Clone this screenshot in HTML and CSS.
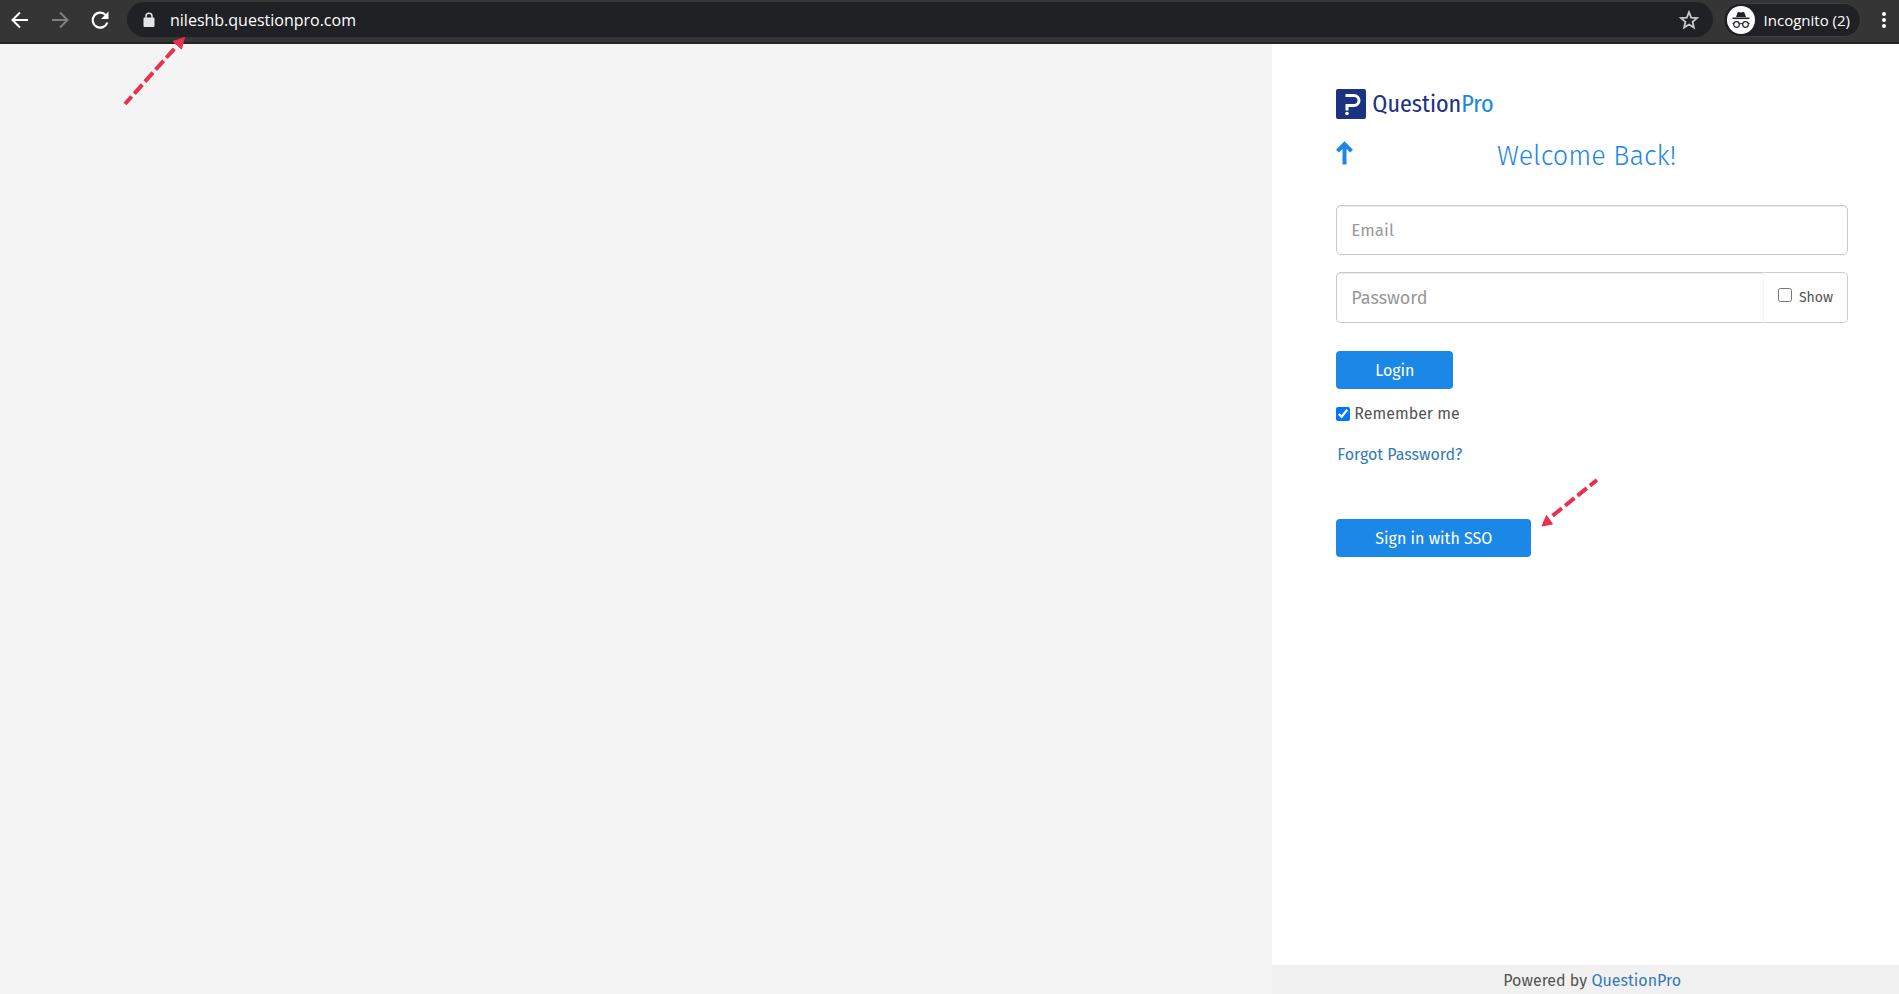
FILE: index.html
```html
<!DOCTYPE html>
<html lang="en">
<head>
  <meta charset="UTF-8">
  <title>QuestionPro Login</title>
  <link rel="stylesheet" href="styles.css">
</head>
<body>

  <!-- Browser bar -->
  <header class="toolbar">
    <nav class="nav-buttons">
      <button class="icon-btn" type="button" aria-label="Back">
        <svg width="20" height="20" viewBox="0 0 20 20" fill="none" stroke="#fff" stroke-width="2"><path d="M18 10H3M10 2.5L2.5 10l7.500 7.500"/></svg>
      </button>
      <button class="icon-btn" type="button" aria-label="Forward">
        <svg width="20" height="20" viewBox="0 0 20 20" fill="none" stroke="#808080" stroke-width="2"><path d="M2 10h15M10 2.500l7.500 7.500-7.500 7.500"/></svg>
      </button>
      <button class="icon-btn" type="button" aria-label="Reload">
        <svg width="20" height="20" viewBox="0 0 20 20"><path d="M17.300 12.500A7.500 7.500 0 1 1 15.800 5.200" fill="none" stroke="#fff" stroke-width="2.200"/><path d="M18.500 1.500V9H11z" fill="#fff"/></svg>
      </button>
    </nav>
    <div class="omnibox">
      <svg width="12" height="16" viewBox="0 0 12 16"><path d="M3 7V4.300a3 3 0 0 1 6 0V7" fill="none" stroke="#e4e4e4" stroke-width="1.500"/><rect x="0.500" y="5.500" width="11" height="9.500" rx="1.200" fill="#e4e4e4"/></svg>
      <span class="url">nileshb.questionpro.com</span>
      <button class="icon-btn" type="button" aria-label="Bookmark">
        <svg width="20" height="20" viewBox="0 0 20 20" fill="none" stroke="#c8c8c8" stroke-width="1.800"><path d="M10 2.200l2.200 5.400 5.800.5-4.400 3.800 1.300 5.700-4.900-3-4.900 3 1.300-5.700L2 8.100l5.800-.5z"/></svg>
      </button>
    </div>
    <div class="incognito">
      <svg width="28" height="28" viewBox="0 0 28 28">
        <circle cx="14" cy="14" r="14" fill="#fff"/>
        <path d="M9 11l1.600-4.400q.3-.8 1.100-.6l2.300.6 2.300-.6q.8-.2 1.100.6L19 11z" fill="#202124"/>
        <path d="M5.500 11.500h17v1.600h-17z" fill="#202124"/>
        <g fill="none" stroke="#202124" stroke-width="1.200"><circle cx="9.500" cy="18.500" r="2.800"/><circle cx="18.500" cy="18.500" r="2.800"/><path d="M12.300 18q1.700-1 3.400 0M5.500 17.500h1.300M21.200 17.500h1.300"/></g>
      </svg>
      <span>Incognito (2)</span>
    </div>
    <button class="icon-btn menu-btn" type="button" aria-label="Menu">
      <svg width="6" height="20" viewBox="0 0 6 20" fill="#fff"><circle cx="3" cy="4" r="2"/><circle cx="3" cy="10" r="2"/><circle cx="3" cy="16" r="2"/></svg>
    </button>
    <svg class="url-arrow" width="64" height="70" viewBox="0 0 64 70"><path d="M2 68L52 12" stroke="#e8304f" stroke-width="4" stroke-dasharray="12 4" stroke-dashoffset="2"/><path d="M61.500 1.500L50 5.500l8.500 7.500z" fill="#e8304f" stroke="#e8304f"/></svg>
  </header>

  <div class="page">
    <main class="panel">
      <div class="content">
        <div class="logo">
          <svg width="30" height="30" viewBox="0 0 30 30"><rect width="30" height="30" rx="2" fill="#1b3380"/><path d="M9.500 6.500H18a5 5 0 0 1 0 10H11V21.500" fill="none" stroke="#fff" stroke-width="3"/><circle cx="11" cy="24.500" r="1.800" fill="#fff"/></svg>
          <span class="logo-text">Question<span class="pro">Pro</span></span>
        </div>

        <div class="heading">
          <svg width="17" height="24" viewBox="0 0 17 24" fill="none" stroke="#1b87e6" stroke-width="4"><path d="M8.500 23.500V4M1.400 10.200L8.500 3l7.100 7.200"/></svg>
          <h1>Welcome Back!</h1>
        </div>

        <form>
          <input class="field" type="email" placeholder="Email" aria-label="Email">
          <div class="password-group">
            <input class="field" type="password" placeholder="Password" aria-label="Password">
            <label class="show"><input type="checkbox">Show</label>
          </div>
          <button class="btn" type="button">Login</button>
          <label class="remember"><input type="checkbox" checked>Remember me</label>
          <a class="forgot" href="#">Forgot Password?</a>
          <div class="sso">
            <button class="btn" type="button">Sign in with SSO</button>
            <svg class="sso-arrow" width="60" height="50" viewBox="0 0 60 50"><path d="M57 2L11 39" stroke="#e8304f" stroke-width="4" stroke-dasharray="12 4" stroke-dashoffset="3"/><path d="M2 48l4.500-10.500 6 8.500z" fill="#e8304f" stroke="#e8304f"/></svg>
          </div>
        </form>
      </div>

      <footer class="footer">Powered by <a href="#">QuestionPro</a></footer>
    </main>
  </div>

</body>
</html>
```

FILE: styles.css
```css
* {
  box-sizing: border-box;
}
body {
  margin: 0;
  min-height: 100vh;
  display: flex;
  flex-direction: column;
  font-family: 'Fira Sans', 'Noto Sans', sans-serif;
  font-size: 16px;
  color: #545454;
  background: #f4f4f4;
}
a {
  color: #337ab7;
  text-decoration: none;
}
svg {
  display: block;
  flex: none;
}

/* Browser bar */
.toolbar {
  position: relative;
  display: flex;
  align-items: center;
  height: 44px;
  padding: 2px 12px 5px 10px;
  background: #353535;
  border-bottom: 2px solid #252525;
  font-family: 'Segoe UI', 'Open Sans', sans-serif;
  color: #fff;
}
.nav-buttons {
  display: flex;
  gap: 20px;
  margin-right: 17px;
}
.icon-btn {
  padding: 0;
  border: none;
  background: none;
  cursor: pointer;
}
.omnibox {
  flex: 1;
  display: flex;
  align-items: center;
  height: 35px;
  padding: 0 14px 0 16px;
  border-radius: 18px;
  background: #202124;
}
.url {
  flex: 1;
  margin-left: 15px;
  font-size: 16px;
}
.incognito {
  display: flex;
  align-items: center;
  gap: 9px;
  height: 34px;
  margin: 0 20px 0 10px;
  padding: 0 10px 0 3px;
  border: 1px solid #3c3d40;
  border-radius: 17px;
  background: #202124;
  font-size: 15px;
}
.url-arrow {
  position: absolute;
  left: 123px;
  top: 36px;
}

/* Login panel on the right */
.page {
  flex: 1;
  display: flex;
  justify-content: flex-end;
}
.panel {
  width: 33%;
  display: flex;
  flex-direction: column;
  background: #fff;
}
.content {
  flex: 1;
  padding: 45px 51px 0 64px;
}
.logo {
  display: flex;
  align-items: center;
  gap: 6px;
  height: 30px;
}
.logo-text {
  font-family: 'Fira Sans Condensed', 'Open Sans Condensed', 'Roboto Condensed', 'Fira Sans', 'Noto Sans', sans-serif;
  font-size: 24px;
  color: #1b3380;
}
.pro {
  color: #1b87e6;
}
.heading {
  display: grid;
  grid-template-columns: 17px 1fr 28px;
  margin-top: 22px;
}
h1 {
  margin: 0;
  font-size: 27px;
  font-weight: 300;
  line-height: 30px;
  text-align: center;
  color: #1b87e6;
}

/* Form */
form {
  display: flex;
  flex-direction: column;
  align-items: flex-start;
  margin-top: 34px;
}
.field {
  width: 100%;
  height: 50px;
  padding: 0 14px;
  border: 1px solid #c4cad2;
  border-radius: 5px;
  box-shadow: inset 0 1px 1px rgba(0,0,0,0.08);
  font: inherit;
  font-size: 17px;
}
.field::placeholder {
  color: #999;
}
.password-group {
  display: flex;
  width: 100%;
  height: 51px;
  margin: 17px 0 28px;
}
.password-group .field {
  flex: 1;
  height: auto;
  border-right: none;
  border-radius: 5px 0 0 5px;
  font-size: 18px;
}
.show {
  display: flex;
  align-items: center;
  gap: 7px;
  padding: 0 14px;
  border: 1px solid #ccc;
  border-left-color: #f4f4f4;
  border-radius: 0 5px 5px 0;
  font-size: 14px;
}
.show input {
  margin: 0 0 6px;
  width: 14px;
  height: 14px;
}
.btn {
  height: 38px;
  padding: 0 39px;
  border: none;
  border-radius: 4px;
  background: #1b87e6;
  color: #fff;
  font: inherit;
  cursor: pointer;
}
.remember {
  display: flex;
  align-items: center;
  gap: 4px;
  margin-top: 14px;
  line-height: 22px;
}
.remember input {
  width: 14px;
  height: 14px;
  margin: 0;
}
.forgot {
  margin: 19px 1px 0;
  line-height: 22px;
}
.sso {
  position: relative;
  margin-top: 53px;
}
.sso-arrow {
  position: absolute;
  left: 100%;
  top: -41px;
  margin-left: 9px;
}

.footer {
  padding: 5px 51px 2px 64px;
  background: #f1f1f1;
  line-height: 22px;
  text-align: center;
}
```
